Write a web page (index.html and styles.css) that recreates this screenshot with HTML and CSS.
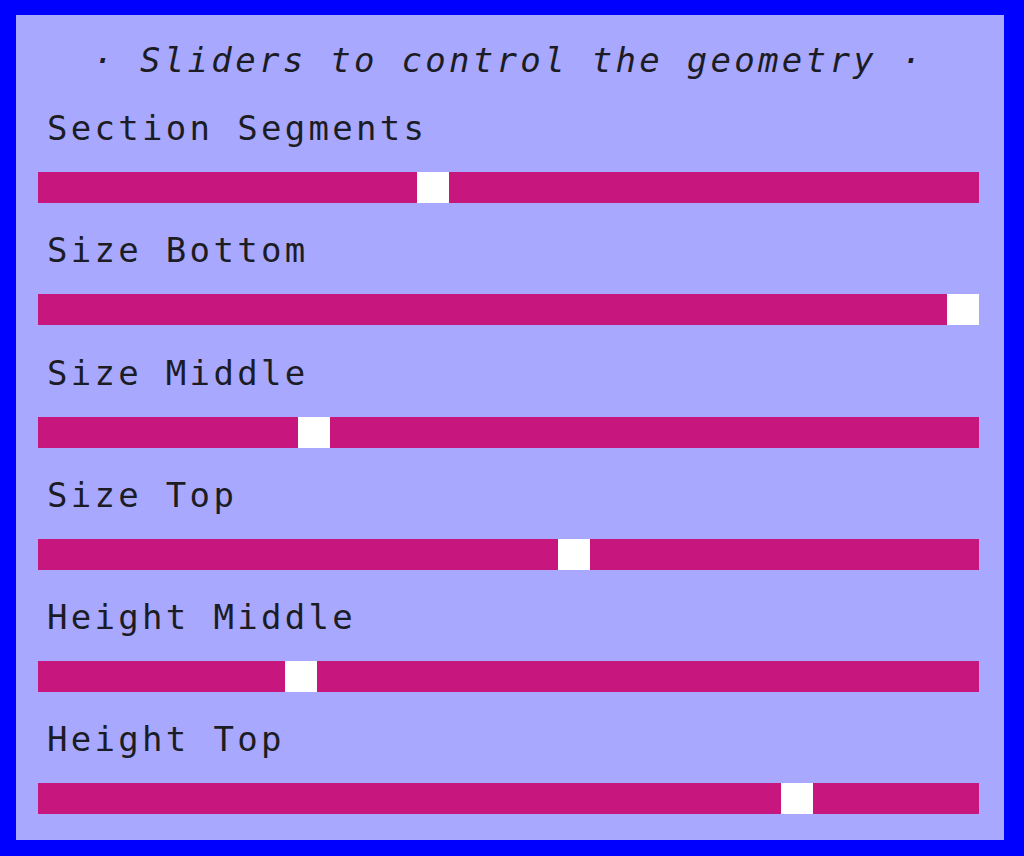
FILE: index.html
```html
<!DOCTYPE html>
<html>
<head>
<meta charset="utf-8">
<link rel="stylesheet" href="styles.css">
</head>
<body>
<div class="panel">
  <div class="title">· Sliders to control the geometry ·</div>
  <div class="row">
    <label class="label">Section Segments</label>
    <input class="slider" type="range" min="0" max="100" step="any" value="41.7">
  </div>
  <div class="row">
    <label class="label">Size Bottom</label>
    <input class="slider" type="range" min="0" max="100" step="any" value="100">
  </div>
  <div class="row">
    <label class="label">Size Middle</label>
    <input class="slider" type="range" min="0" max="100" step="any" value="28.6">
  </div>
  <div class="row">
    <label class="label">Size Top</label>
    <input class="slider" type="range" min="0" max="100" step="any" value="57.2">
  </div>
  <div class="row">
    <label class="label">Height Middle</label>
    <input class="slider" type="range" min="0" max="100" step="any" value="27.2">
  </div>
  <div class="row">
    <label class="label">Height Top</label>
    <input class="slider" type="range" min="0" max="100" step="any" value="81.7">
  </div>
</div>
</body>
</html>
```
FILE: styles.css
```css
html, body {
  margin: 0;
  padding: 0;
}
body {
  background: #0000ff;
  width: 1024px;
  height: 856px;
  overflow: hidden;
}
.panel {
  box-sizing: border-box;
  margin: 15px 20px 0 16px;
  height: 825px;
  background: #a8a8ff;
  padding: 25px 25px 0 22px;
  display: flex;
  flex-direction: column;
  font-family: "DejaVu Sans Mono", monospace;
  color: #1c1c24;
}
.title {
  font-style: italic;
  font-size: 34px;
  line-height: 40px;
  letter-spacing: 3.3px;
  text-align: center;
  margin-bottom: 28px;
}
.row {
  display: flex;
  flex-direction: column;
}
.label {
  font-size: 34px;
  line-height: 40px;
  letter-spacing: 3.3px;
  padding-left: 9px;
  margin-bottom: 24px;
}
.slider {
  -webkit-appearance: none;
  appearance: none;
  margin: 0 0 27.3px 0;
  width: 941px;
  height: 31px;
  background: #c8167f;
  outline: none;
  border: none;
  padding: 0;
}
.slider::-webkit-slider-runnable-track {
  height: 31px;
  background: transparent;
}
.slider::-webkit-slider-thumb {
  -webkit-appearance: none;
  appearance: none;
  width: 32px;
  height: 31px;
  background: #ffffff;
  border: none;
  border-radius: 0;
}
.slider::-moz-range-thumb {
  width: 32px;
  height: 31px;
  background: #ffffff;
  border: none;
  border-radius: 0;
}
```
